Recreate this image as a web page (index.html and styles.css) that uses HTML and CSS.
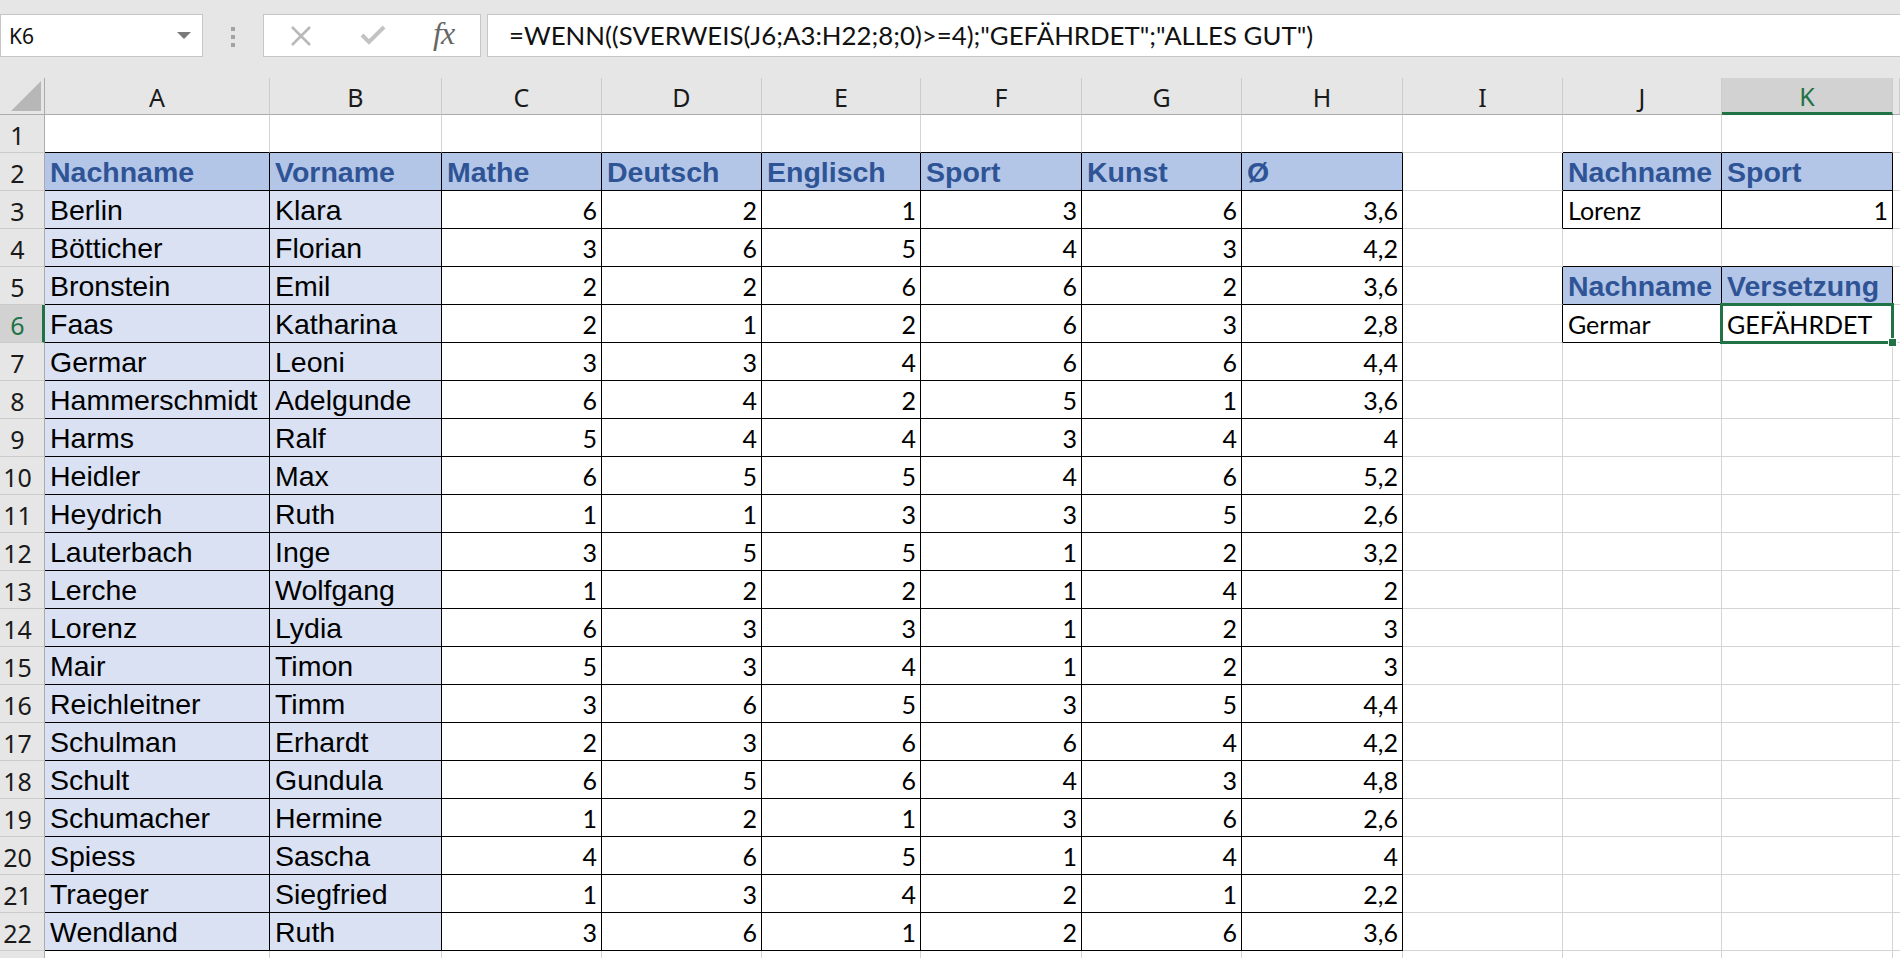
FILE: index.html
```html
<!DOCTYPE html>
<html lang="de">
<head>
<meta charset="utf-8">
<title>Excel – SVERWEIS</title>
<link rel="stylesheet" href="styles.css">
</head>
<body>
<div class="toolbar">
  <div class="namebox"><span class="nbtext">K6</span><span class="caret"></span></div>
  <div class="dots"><i></i><i></i><i></i></div>
  <div class="fxbox">
    <svg class="ic-x" width="22" height="22" viewBox="0 0 22 22"><path d="M2 2 L20 20 M20 2 L2 20" stroke="#b9b9b9" stroke-width="2.6" fill="none"/></svg>
    <svg class="ic-ok" width="26" height="22" viewBox="0 0 26 22"><path d="M2 11 L9 18 L24 3" stroke="#c3c3c3" stroke-width="4" fill="none" stroke-linejoin="miter"/></svg>
    <span class="fx">fx</span>
  </div>
  <div class="formula">=WENN((SVERWEIS(J6;A3:H22;8;0)&gt;=4);"GEFÄHRDET";"ALLES GUT")</div>
</div>
<div class="sheet">
  <div class="corner"><svg width="30" height="30" viewBox="0 0 30 30"><path d="M30 0 L30 30 L0 30 Z" fill="#b7b7b7"/></svg></div>
  <div class="ch">A</div><div class="ch">B</div><div class="ch">C</div><div class="ch">D</div><div class="ch">E</div><div class="ch">F</div><div class="ch">G</div><div class="ch">H</div><div class="ch">I</div><div class="ch">J</div><div class="ch ch-sel">K</div><div class="ch"></div>

  <div class="rh">1</div>
  <div class="c bb"></div><div class="c bb"></div><div class="c bb"></div><div class="c bb"></div><div class="c bb"></div><div class="c bb"></div><div class="c bb"></div><div class="c bb"></div><div class="c"></div><div class="c bb"></div><div class="c bb"></div><div class="c"></div>

  <div class="rh">2</div>
  <div class="c t th">Nachname</div><div class="c t th">Vorname</div><div class="c t th">Mathe</div><div class="c t th">Deutsch</div><div class="c t th">Englisch</div><div class="c t th">Sport</div><div class="c t th">Kunst</div><div class="c t th">Ø</div><div class="c br"></div><div class="c t th">Nachname</div><div class="c t th">Sport</div><div class="c"></div>

  <div class="rh">3</div>
  <div class="c t nm">Berlin</div><div class="c t nm">Klara</div><div class="c t n">6</div><div class="c t n">2</div><div class="c t n">1</div><div class="c t n">3</div><div class="c t n">6</div><div class="c t n">3,6</div><div class="c br"></div><div class="c t cal">Lorenz</div><div class="c t n">1</div><div class="c"></div>

  <div class="rh">4</div>
  <div class="c t nm">Bötticher</div><div class="c t nm">Florian</div><div class="c t n">3</div><div class="c t n">6</div><div class="c t n">5</div><div class="c t n">4</div><div class="c t n">3</div><div class="c t n">4,2</div><div class="c"></div><div class="c bb"></div><div class="c bb"></div><div class="c"></div>

  <div class="rh">5</div>
  <div class="c t nm">Bronstein</div><div class="c t nm">Emil</div><div class="c t n">2</div><div class="c t n">2</div><div class="c t n">6</div><div class="c t n">6</div><div class="c t n">2</div><div class="c t n">3,6</div><div class="c br"></div><div class="c t th">Nachname</div><div class="c t th">Versetzung</div><div class="c"></div>

  <div class="rh rh-sel">6</div>
  <div class="c t nm">Faas</div><div class="c t nm">Katharina</div><div class="c t n">2</div><div class="c t n">1</div><div class="c t n">2</div><div class="c t n">6</div><div class="c t n">3</div><div class="c t n">2,8</div><div class="c br"></div><div class="c t cal">Germar</div><div class="c t cal sel">GEFÄHRDET</div><div class="c"></div>

  <div class="rh">7</div>
  <div class="c t nm">Germar</div><div class="c t nm">Leoni</div><div class="c t n">3</div><div class="c t n">3</div><div class="c t n">4</div><div class="c t n">6</div><div class="c t n">6</div><div class="c t n">4,4</div><div class="c"></div><div class="c"></div><div class="c"></div><div class="c"></div>

  <div class="rh">8</div>
  <div class="c t nm">Hammerschmidt</div><div class="c t nm">Adelgunde</div><div class="c t n">6</div><div class="c t n">4</div><div class="c t n">2</div><div class="c t n">5</div><div class="c t n">1</div><div class="c t n">3,6</div><div class="c"></div><div class="c"></div><div class="c"></div><div class="c"></div>

  <div class="rh">9</div>
  <div class="c t nm">Harms</div><div class="c t nm">Ralf</div><div class="c t n">5</div><div class="c t n">4</div><div class="c t n">4</div><div class="c t n">3</div><div class="c t n">4</div><div class="c t n">4</div><div class="c"></div><div class="c"></div><div class="c"></div><div class="c"></div>

  <div class="rh">10</div>
  <div class="c t nm">Heidler</div><div class="c t nm">Max</div><div class="c t n">6</div><div class="c t n">5</div><div class="c t n">5</div><div class="c t n">4</div><div class="c t n">6</div><div class="c t n">5,2</div><div class="c"></div><div class="c"></div><div class="c"></div><div class="c"></div>

  <div class="rh">11</div>
  <div class="c t nm">Heydrich</div><div class="c t nm">Ruth</div><div class="c t n">1</div><div class="c t n">1</div><div class="c t n">3</div><div class="c t n">3</div><div class="c t n">5</div><div class="c t n">2,6</div><div class="c"></div><div class="c"></div><div class="c"></div><div class="c"></div>

  <div class="rh">12</div>
  <div class="c t nm">Lauterbach</div><div class="c t nm">Inge</div><div class="c t n">3</div><div class="c t n">5</div><div class="c t n">5</div><div class="c t n">1</div><div class="c t n">2</div><div class="c t n">3,2</div><div class="c"></div><div class="c"></div><div class="c"></div><div class="c"></div>

  <div class="rh">13</div>
  <div class="c t nm">Lerche</div><div class="c t nm">Wolfgang</div><div class="c t n">1</div><div class="c t n">2</div><div class="c t n">2</div><div class="c t n">1</div><div class="c t n">4</div><div class="c t n">2</div><div class="c"></div><div class="c"></div><div class="c"></div><div class="c"></div>

  <div class="rh">14</div>
  <div class="c t nm">Lorenz</div><div class="c t nm">Lydia</div><div class="c t n">6</div><div class="c t n">3</div><div class="c t n">3</div><div class="c t n">1</div><div class="c t n">2</div><div class="c t n">3</div><div class="c"></div><div class="c"></div><div class="c"></div><div class="c"></div>

  <div class="rh">15</div>
  <div class="c t nm">Mair</div><div class="c t nm">Timon</div><div class="c t n">5</div><div class="c t n">3</div><div class="c t n">4</div><div class="c t n">1</div><div class="c t n">2</div><div class="c t n">3</div><div class="c"></div><div class="c"></div><div class="c"></div><div class="c"></div>

  <div class="rh">16</div>
  <div class="c t nm">Reichleitner</div><div class="c t nm">Timm</div><div class="c t n">3</div><div class="c t n">6</div><div class="c t n">5</div><div class="c t n">3</div><div class="c t n">5</div><div class="c t n">4,4</div><div class="c"></div><div class="c"></div><div class="c"></div><div class="c"></div>

  <div class="rh">17</div>
  <div class="c t nm">Schulman</div><div class="c t nm">Erhardt</div><div class="c t n">2</div><div class="c t n">3</div><div class="c t n">6</div><div class="c t n">6</div><div class="c t n">4</div><div class="c t n">4,2</div><div class="c"></div><div class="c"></div><div class="c"></div><div class="c"></div>

  <div class="rh">18</div>
  <div class="c t nm">Schult</div><div class="c t nm">Gundula</div><div class="c t n">6</div><div class="c t n">5</div><div class="c t n">6</div><div class="c t n">4</div><div class="c t n">3</div><div class="c t n">4,8</div><div class="c"></div><div class="c"></div><div class="c"></div><div class="c"></div>

  <div class="rh">19</div>
  <div class="c t nm">Schumacher</div><div class="c t nm">Hermine</div><div class="c t n">1</div><div class="c t n">2</div><div class="c t n">1</div><div class="c t n">3</div><div class="c t n">6</div><div class="c t n">2,6</div><div class="c"></div><div class="c"></div><div class="c"></div><div class="c"></div>

  <div class="rh">20</div>
  <div class="c t nm">Spiess</div><div class="c t nm">Sascha</div><div class="c t n">4</div><div class="c t n">6</div><div class="c t n">5</div><div class="c t n">1</div><div class="c t n">4</div><div class="c t n">4</div><div class="c"></div><div class="c"></div><div class="c"></div><div class="c"></div>

  <div class="rh">21</div>
  <div class="c t nm">Traeger</div><div class="c t nm">Siegfried</div><div class="c t n">1</div><div class="c t n">3</div><div class="c t n">4</div><div class="c t n">2</div><div class="c t n">1</div><div class="c t n">2,2</div><div class="c"></div><div class="c"></div><div class="c"></div><div class="c"></div>

  <div class="rh">22</div>
  <div class="c t nm">Wendland</div><div class="c t nm">Ruth</div><div class="c t n">3</div><div class="c t n">6</div><div class="c t n">1</div><div class="c t n">2</div><div class="c t n">6</div><div class="c t n">3,6</div><div class="c"></div><div class="c"></div><div class="c"></div><div class="c"></div>

  <div class="rh"></div>
  <div class="c"></div><div class="c"></div><div class="c"></div><div class="c"></div><div class="c"></div><div class="c"></div><div class="c"></div><div class="c"></div><div class="c"></div><div class="c"></div><div class="c"></div><div class="c"></div>
</div>
</body>
</html>
```

FILE: styles.css
```css
html, body {
  margin: 0;
  padding: 0;
  background: #ffffff;
  overflow: hidden;
  width: 1900px;
  height: 958px;
}
body {
  font-family: "Liberation Sans", Arial, sans-serif;
  color: #000;
}

/* ---------- formula bar ---------- */
.toolbar {
  height: 78px;
  box-sizing: border-box;
  background: #e6e6e6;
  display: flex;
  align-items: flex-start;
  padding-top: 14px;
}
.namebox {
  width: 203px;
  height: 43px;
  box-sizing: border-box;
  background: #fff;
  border: 1px solid #c6c6c6;
  display: flex;
  align-items: center;
}
.nbtext {
  font-family: "Noto Sans", "Open Sans", sans-serif;
  font-size: 21px;
  padding-left: 8px;
  color: #111;
}
.caret {
  margin-left: auto;
  margin-right: 11px;
  width: 0;
  height: 0;
  border-left: 7px solid transparent;
  border-right: 7px solid transparent;
  border-top: 7px solid #7a7a7a;
}
.dots {
  margin-left: 28px;
  margin-top: 13px;
  display: flex;
  flex-direction: column;
  gap: 4px;
}
.dots i {
  display: block;
  width: 4px;
  height: 4px;
  background: #a3a3a3;
}
.fxbox {
  margin-left: 28px;
  width: 218px;
  height: 43px;
  box-sizing: border-box;
  background: #fff;
  border: 1px solid #c6c6c6;
  display: flex;
  align-items: center;
}
.ic-x { margin-left: 26px; }
.ic-ok { margin-left: 48px; margin-top: -2px; }
.fx {
  margin-left: 47px;
  font-family: "Liberation Serif", "Times New Roman", serif;
  font-style: italic;
  font-size: 32px;
  color: #666666;
  letter-spacing: -1px;
  margin-top: -4px;
}
.formula {
  flex: 1;
  margin-left: 6px;
  margin-right: -1px;
  height: 43px;
  box-sizing: border-box;
  background: #fff;
  border: 1px solid #c6c6c6;
  padding-left: 21px;
  font-family: Lato, "Open Sans", sans-serif;
  font-size: 25.8px;
  line-height: 41px;
  white-space: nowrap;
  color: #111;
}

/* ---------- grid ---------- */
.sheet {
  display: grid;
  grid-template-columns: 45px 225px 172px 160px 160px 159px 161px 160px 161px 160px 159px 171px 7px;
  grid-template-rows: 37px repeat(23, 38px);
}
.sheet > div {
  box-sizing: border-box;
  white-space: nowrap;
  overflow: hidden;
}
.corner {
  background: #e6e6e6;
  border-right: 1px solid #ababab;
  border-bottom: 1px solid #ababab;
  display: flex;
  align-items: flex-end;
  justify-content: flex-end;
  padding: 0 3px 3px 0;
}
.corner svg { display: block; }
.ch {
  background: #e6e6e6;
  border-right: 1px solid #cbcbcb;
  border-bottom: 1px solid #ababab;
  font-family: "Noto Sans", "Open Sans", sans-serif;
  font-size: 25px;
  line-height: 36px;
  padding-top: 1px;
  text-align: center;
  color: #1a1a1a;
}
.ch-sel {
  background: #d2d2d2;
  color: #217346;
  border-bottom: 3px solid #217346;
  line-height: 34px;
}
.rh {
  background: #e6e6e6;
  border-right: 1px solid #ababab;
  border-bottom: 1px solid #cbcbcb;
  font-family: "Noto Sans", "Open Sans", sans-serif;
  font-size: 25px;
  line-height: 38px;
  padding-top: 1px;
  text-align: center;
  padding-right: 9px;
  color: #1a1a1a;
}
.rh-sel {
  background: #d2d2d2;
  color: #217346;
  border-right: 3px solid #217346;
  padding-right: 7px;
}
.c {
  border-right: 1px solid #d4d4d4;
  border-bottom: 1px solid #d4d4d4;
  font-size: 28.5px;
  line-height: 37px;
  padding: 1px 4px 0 5px;
}
.bb { border-bottom-color: #000; }
.br { border-right-color: #000; }
.t {
  border-right-color: #000;
  border-bottom-color: #000;
}
.th {
  background: #b4c6e7;
  color: #2f5496;
  font-weight: bold;
}
.nm {
  background: #d9e1f2;
}
.n {
  font-family: Lato, "Open Sans", sans-serif;
  font-size: 25px;
  text-align: right;
}
.cal {
  font-family: Lato, "Open Sans", sans-serif;
  font-size: 25px;
}
.sheet > .sel {
  position: relative;
  overflow: visible;
}
.sel::after {
  content: "";
  position: absolute;
  left: -2px;
  top: -2px;
  right: -2px;
  bottom: -2px;
  border: 3px solid #217346;
  pointer-events: none;
}
.sel::before {
  content: "";
  position: absolute;
  right: -5px;
  bottom: -5px;
  width: 7px;
  height: 7px;
  background: #217346;
  border: 1px solid #fff;
  z-index: 2;
}
```
